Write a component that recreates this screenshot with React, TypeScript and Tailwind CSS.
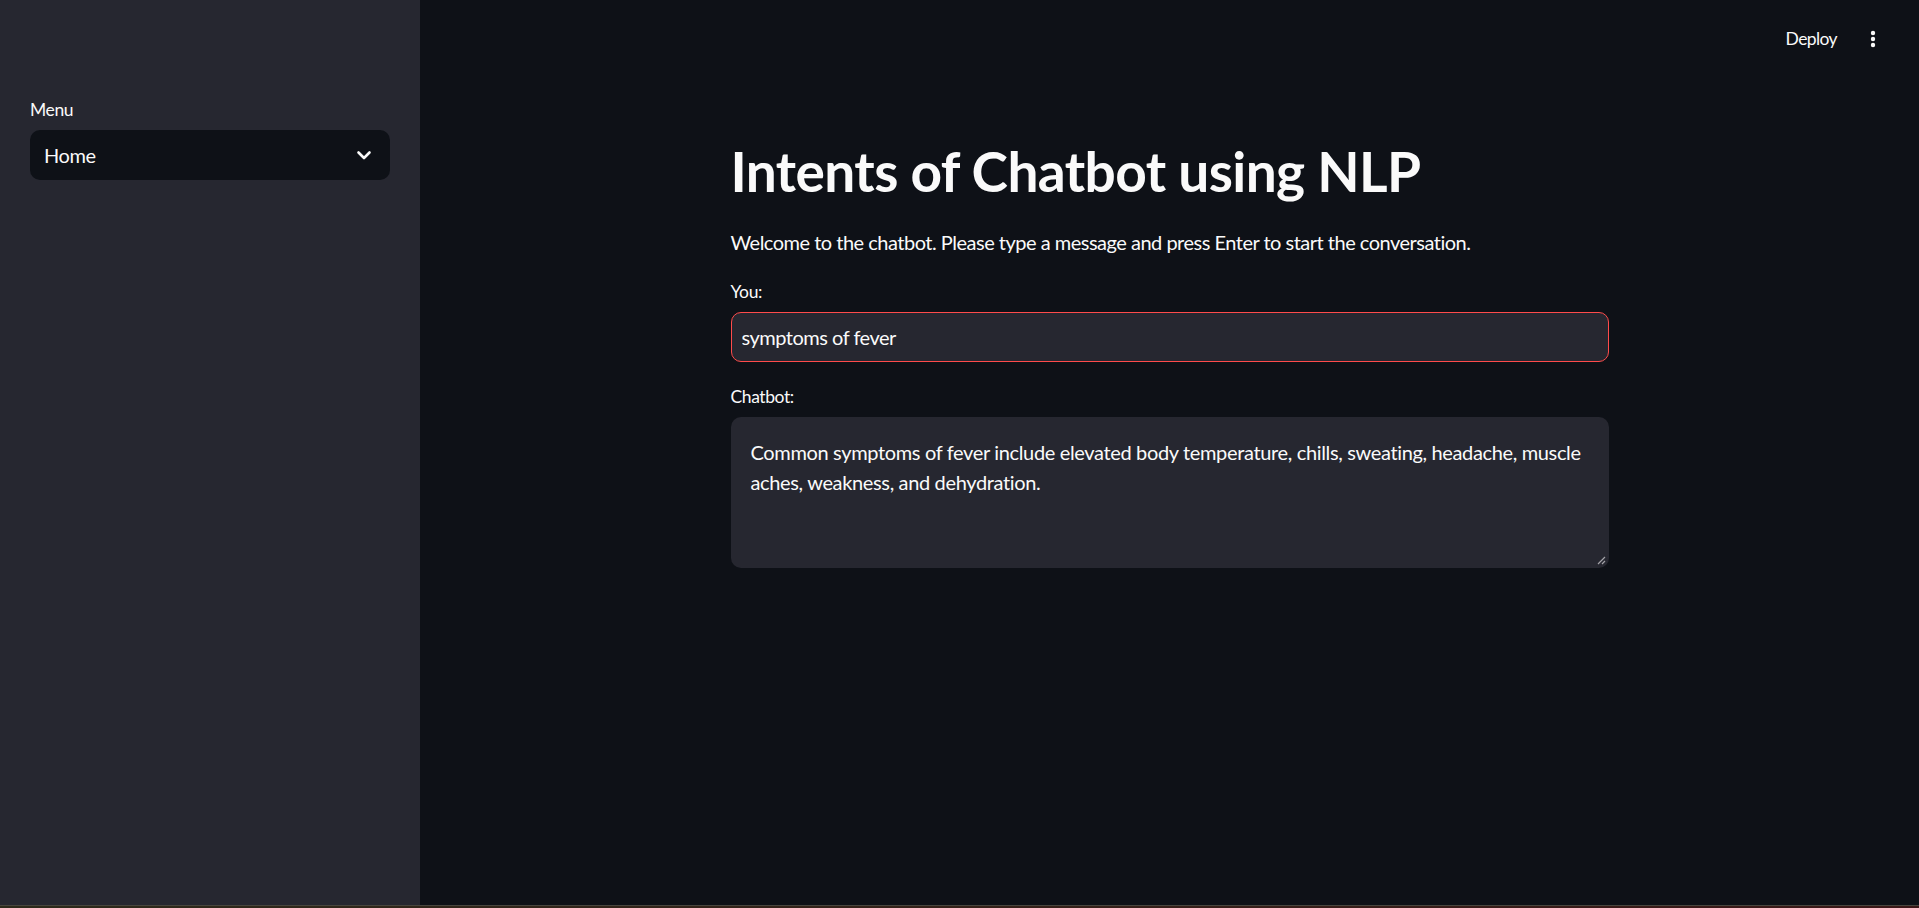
import React from "react";

function Chevron() {
  return (
    <svg width="24" height="24" viewBox="0 0 24 24" fill="none" className="shrink-0">
      <path d="M6.5 9.5l5.5 5.5 5.5-5.5" stroke="#fafafa" strokeWidth="2.6" strokeLinecap="round" strokeLinejoin="round" />
    </svg>
  );
}

function Dots() {
  return (
    <svg width="6" height="18" viewBox="0 0 6 18" className="shrink-0">
      <circle cx="3" cy="3" r="2.2" fill="#fafafa" />
      <circle cx="3" cy="9" r="2.2" fill="#fafafa" />
      <circle cx="3" cy="15" r="2.2" fill="#fafafa" />
    </svg>
  );
}

function ResizeHandle() {
  return (
    <svg width="10" height="10" viewBox="0 0 10 10" className="absolute bottom-[3px] right-[3px]">
      <path d="M9 2L2 9M9 6L6 9" stroke="#a3a3a8" strokeWidth="1.2" />
    </svg>
  );
}

export default function App() {
  return (
    <div className="flex h-[908px] w-full flex-col overflow-hidden bg-[#0e1117] font-['Lato','Open_Sans',sans-serif] text-[#fafafa]">
      <div className="flex min-h-0 flex-1">
        <aside className="w-[420px] shrink-0 bg-[#262730] px-[30px] pt-[95px]">
          <div className="flex h-[30px] items-center text-[17.5px] tracking-[-0.4px]">Menu</div>
          <div className="mt-[5px] flex h-[50px] items-center justify-between rounded-[10px] bg-[#0e1117] pl-[14px] pr-[14px] text-[20px] tracking-[-0.4px]">
            <span>Home</span>
            <Chevron />
          </div>
        </aside>
        <main className="flex min-w-0 flex-1 flex-col">
          <header className="flex h-[78px] shrink-0 items-center justify-end gap-[33px] pr-[43px]">
            <span className="text-[17.5px] tracking-[-0.6px]">Deploy</span>
            <Dots />
          </header>
          <div className="mx-auto w-[878px] pt-[60px]">
            <h1 className="text-[55px] font-bold leading-[1.2] tracking-[-0.6px]">Intents of Chatbot using NLP</h1>
            <p className="mt-[22px] text-[20px] leading-[32px] tracking-[-0.5px]">
              Welcome to the chatbot. Please type a message and press Enter to start the conversation.
            </p>
            <div className="mt-[19px] flex h-[30px] items-center text-[17.5px] tracking-[-0.4px]">You:</div>
            <input
              readOnly
              value="symptoms of fever"
              className="mt-[5px] h-[50px] w-full rounded-[10px] border border-[#ff4b4b] bg-[#262730] pl-[10px] text-[20px] tracking-[-0.5px] text-[#fafafa] outline-none"
            />
            <div className="mt-[20px] flex h-[30px] items-center text-[17.5px] tracking-[-0.4px]">Chatbot:</div>
            <div className="relative mt-[5px] h-[151px] w-full rounded-[10px] bg-[#262730] p-[20px] text-[20px] leading-[30px] tracking-[-0.35px]">
              <div className="whitespace-nowrap">
                Common symptoms of fever include elevated body temperature, chills, sweating, headache, muscle
              </div>
              <div className="whitespace-nowrap">aches, weakness, and dehydration.</div>
              <ResizeHandle />
            </div>
          </div>
        </main>
      </div>
      <div className="h-[1px] shrink-0 bg-[#48463e]" />
      <div className="h-[2px] shrink-0 bg-gradient-to-r from-[#2d2a1b] to-[#3b1818]" />
    </div>
  );
}
